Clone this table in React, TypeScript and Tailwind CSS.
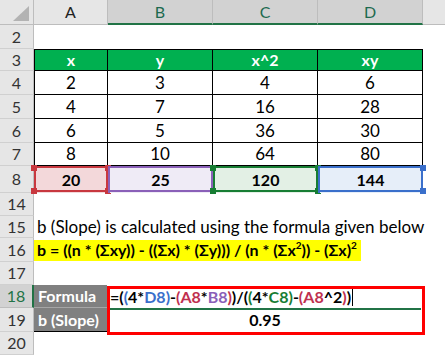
import React from "react";

const FONT = { fontFamily: "Lato, 'Open Sans', sans-serif" };

const COLS = [74, 105, 105, 105];

function RowHead({ n, h, active = false }: { n: number; h: number; active?: boolean }) {
  return (
    <div
      className={
        "flex w-[34px] shrink-0 items-center justify-center border-b border-r text-[16px] " +
        (active
          ? "bg-[#d2d2d2] text-[#217346] border-b-[#bdbdbd] border-r-2 border-r-[#217346]"
          : "bg-[#e6e6e6] text-[#333] border-b-[#d0d0d0] border-r-[#bdbdbd]")
      }
      style={{ height: h }}
    >
      {n}
    </div>
  );
}

function ColHeader() {
  return (
    <div className="flex h-[25px]">
      <div className="relative w-[34px] shrink-0 border-b border-r border-[#bdbdbd] bg-[#e6e6e6]">
        <svg className="absolute right-[4px] bottom-[3px]" width="16" height="15" viewBox="0 0 16 15">
          <polygon points="16,0 16,15 0,15" fill="#b3b3b3" />
        </svg>
      </div>
      <div className="flex w-[74px] shrink-0 items-center justify-center border-b border-r border-[#bdbdbd] bg-[#e6e6e6] text-[16px] text-[#222]">
        A
      </div>
      {["B", "C", "D"].map((c) => (
        <div
          key={c}
          className="flex w-[105px] shrink-0 items-center justify-center border-r border-r-[#bdbdbd] border-b-2 border-b-[#217346] bg-[#d2d2d2] text-[16px] text-[#1d6a4f]"
        >
          {c}
        </div>
      ))}
      <div className="flex-1 border-b border-[#bdbdbd] bg-[#e6e6e6]" />
    </div>
  );
}

function DataRow({ n, h, vals, header = false }: { n: number; h: number; vals: string[]; header?: boolean }) {
  return (
    <div className="flex" style={{ height: h }}>
      <RowHead n={n} h={h} />
      {vals.map((v, i) => (
        <div
          key={i}
          className={
            "flex shrink-0 items-center justify-center border-b border-r border-black " +
            (i === 0 ? "border-l " : "") +
            (header ? "border-t bg-[#00b050] text-[16px] font-bold text-white" : "text-[17px] text-black")
          }
          style={{ width: COLS[i] }}
        >
          {v}
        </div>
      ))}
    </div>
  );
}

function Handle({ color, side }: { color: string; side: "l" | "r" }) {
  const x = side === "l" ? "left-[-3px]" : "right-[-3px]";
  return (
    <>
      <div className={"absolute top-[-1px] h-[6px] w-[6px] " + x} style={{ background: color }} />
      <div className={"absolute bottom-[-1px] h-[6px] w-[6px] " + x} style={{ background: color }} />
    </>
  );
}

function SumRow() {
  const cells = [
    { v: "20", fill: "#f3d8da", line: "#c8383f", handles: ["l", "r"] },
    { v: "25", fill: "#efebf6", line: "#8a60b8", handles: [] },
    { v: "120", fill: "#e3f0e5", line: "#177d33", handles: ["l", "r"] },
    { v: "144", fill: "#e6eef9", line: "#3a6fcb", handles: ["r"] },
  ];
  return (
    <div className="flex h-[27px]">
      <RowHead n={8} h={27} />
      {cells.map((c, i) => (
        <div
          key={i}
          className="relative flex shrink-0 items-center justify-center text-[16px] font-bold text-black"
          style={{ width: COLS[i], background: c.fill }}
        >
          <div className="absolute inset-x-0 top-0 h-[2px]" style={{ background: c.line }} />
          <div className="absolute inset-x-0 bottom-[1px] h-[2px]" style={{ background: c.line }} />
          <div className="absolute inset-y-0 left-0 w-[2px]" style={{ background: c.line }} />
          <div className="absolute inset-y-0 right-0 w-[2px]" style={{ background: c.line }} />
          {c.handles.map((s) => (
            <Handle key={s} color={c.line} side={s as "l" | "r"} />
          ))}
          <span className="relative">{c.v}</span>
        </div>
      ))}
    </div>
  );
}

function TextRow({ n, h, children }: { n: number; h: number; children?: React.ReactNode }) {
  return (
    <div className="flex" style={{ height: h }}>
      <RowHead n={n} h={h} />
      <div className="flex flex-1 items-center whitespace-nowrap">{children}</div>
    </div>
  );
}

const parts: [string, string][] = [
  ["=(", "#000"],
  ["(", "#3a6fcb"],
  ["4*", "#000"],
  ["D8", "#3a6fcb"],
  [")", "#3a6fcb"],
  ["-", "#000"],
  ["(", "#c0304f"],
  ["A8", "#c0304f"],
  ["*", "#000"],
  ["B8", "#8a60b8"],
  [")", "#c0304f"],
  [")/(", "#000"],
  ["(", "#177d33"],
  ["4*", "#000"],
  ["C8", "#177d33"],
  [")", "#177d33"],
  ["-", "#000"],
  ["(", "#c0304f"],
  ["A8", "#c0304f"],
  ["^2", "#000"],
  [")", "#c0304f"],
  [")", "#000"],
];

export default function App() {
  return (
    <div className="h-[355px] w-[445px] overflow-hidden bg-white" style={FONT}>
      <ColHeader />
      <TextRow n={2} h={24} />
      <DataRow n={3} h={22} vals={["x", "y", "x^2", "xy"]} header />
      <DataRow n={4} h={24} vals={["2", "3", "4", "6"]} />
      <DataRow n={5} h={24} vals={["4", "7", "16", "28"]} />
      <DataRow n={6} h={24} vals={["6", "5", "36", "30"]} />
      <DataRow n={7} h={23} vals={["8", "10", "64", "80"]} />
      <SumRow />
      <TextRow n={14} h={23} />
      <TextRow n={15} h={22}>
        <span className="pl-[3px] text-[17px] text-black">b (Slope) is calculated using the formula given below</span>
      </TextRow>
      <TextRow n={16} h={24}>
        <span className="flex h-[21px] w-[327px] items-center bg-[#ffff00] pl-[3px] text-[16px] font-bold text-black">
          b = ((n * (Σxy)) - ((Σx) * (Σy))) / (n * (Σx<sup className="text-[10px]">2</sup>)) - (Σx)
          <sup className="text-[10px]">2</sup>
        </span>
      </TextRow>
      <TextRow n={17} h={23} />
      <div className="relative">
        <div className="flex h-[23px]">
          <RowHead n={18} h={23} active />
          <div className="flex w-[73px] shrink-0 items-center border-b border-[#a6a6a6] bg-[#808080] pl-[4px] text-[16px] font-bold text-white">
            Formula
          </div>
          <div className="relative flex w-[316px] shrink-0 items-center pl-[3px] text-[16px] font-bold">
            {parts.map(([t, c], i) => (
              <span key={i} style={{ color: c }}>
                {t}
              </span>
            ))}
            <span className="ml-[1px] h-[18px] w-[1px] bg-black" />
            <div className="absolute bottom-[-2px] left-0 right-[2px] h-[2px] bg-[#217346]" />
          </div>
        </div>
        <div className="flex h-[24px]">
          <RowHead n={19} h={24} />
          <div className="flex w-[73px] shrink-0 items-center border-b border-black bg-[#808080] pl-[4px] text-[16px] font-bold text-white">
            b (Slope)
          </div>
          <div className="flex w-[316px] shrink-0 items-center justify-center text-[16px] font-bold text-black">
            0.95
          </div>
        </div>
        <div className="pointer-events-none absolute left-[107px] top-[1px] h-[49px] w-[318px] border-[3px] border-[#ff0000]" />
      </div>
      <TextRow n={20} h={23} />
    </div>
  );
}
